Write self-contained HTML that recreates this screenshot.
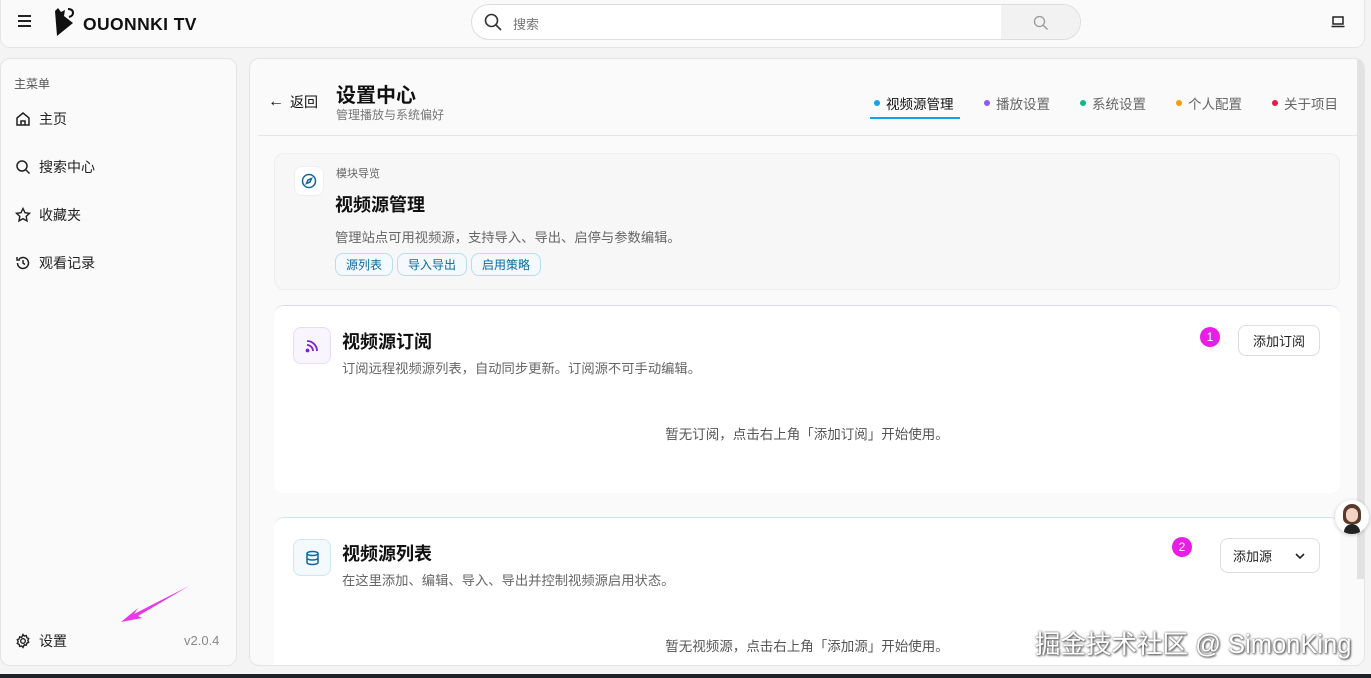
<!DOCTYPE html>
<html><head><meta charset="utf-8"><style>
*{box-sizing:border-box;margin:0;padding:0}
body{width:1371px;height:678px;overflow:hidden;background:#f4f4f5;font-family:"Liberation Sans","Noto Sans CJK SC",sans-serif;color:#111;position:relative}
.hdr{position:absolute;left:0;top:0;width:1365px;height:48px;background:#fafafa;border:1px solid #e6e6e6;border-top:none;border-radius:0 0 10px 10px}
.side{position:absolute;left:0;top:58px;width:237px;height:608px;background:#fafafa;border:1px solid #e4e4e7;border-radius:10px}
.main{position:absolute;left:249px;top:58px;width:1116px;height:608px;background:#fafafa;border:1px solid #e4e4e7;border-radius:10px;overflow:hidden}
.abs{position:absolute}
.nav{position:absolute;left:14px;font-size:14px;display:flex;align-items:center;gap:8px;color:#222}
.tab{position:absolute;top:34px;font-size:13.5px;color:#666;display:flex;align-items:center;gap:6px}
.dot{width:6px;height:6px;border-radius:50%}
.card{position:absolute;background:#fff;border-radius:10px}
.pill{display:inline-block;border:1px solid #b9dcef;color:#0a6a9e;border-radius:8px;font-size:12px;padding:2px 10px;margin-right:4px;background:#f3f9fd}
.btn{position:absolute;border:1px solid #ddd;border-radius:8px;background:#fff;font-size:13px;display:flex;align-items:center;justify-content:center;color:#222}
.badge{position:absolute;width:20px;height:20px;border-radius:50%;background:#e81ee8;color:#fff;font-size:12px;display:flex;align-items:center;justify-content:center}
</style></head><body>
<div class="hdr">
<div class="abs" style="left:17px;top:15px;width:13px">
<div style="height:2px;background:#222;margin-bottom:3px"></div><div style="height:2px;background:#222;margin-bottom:3px"></div><div style="height:2px;background:#222"></div></div>
<svg class="abs" style="left:52px;top:7px" width="24" height="30" viewBox="0 0 24 30"><path d="M2 4 L5 1 L8 5 L12 3 L11 9 L20 16 L4 29 Z" fill="#111"/><path d="M15 2 q5 0 5 4 q0 3 -4 4" stroke="#111" stroke-width="2" fill="none"/></svg>
<div class="abs" style="left:82px;top:14px;font-size:17.5px;font-weight:bold;letter-spacing:.4px">OUONNKI TV</div>
<div class="abs" style="left:470px;top:4px;width:610px;height:36px;border:1px solid #ddd;border-radius:18px;background:#fff;overflow:hidden">
<svg class="abs" style="left:12px;top:8px" width="18" height="18" viewBox="0 0 18 18"><circle cx="7.5" cy="7.5" r="6" stroke="#333" stroke-width="1.6" fill="none"/><path d="M12 12l5 5" stroke="#333" stroke-width="1.6"/></svg>
<div class="abs" style="left:41px;top:9px;font-size:13px;color:#777">搜索</div>
<div class="abs" style="left:529px;top:0;width:81px;height:36px;background:#f2f2f2">
<svg class="abs" style="left:32px;top:10px" width="16" height="16" viewBox="0 0 16 16"><circle cx="6.5" cy="6.5" r="5" stroke="#999" stroke-width="1.3" fill="none"/><path d="M10.5 10.5l4 4" stroke="#999" stroke-width="1.3"/></svg></div></div>
<svg class="abs" style="left:1330px;top:16px" width="14" height="12" viewBox="0 0 14 12"><rect x="2" y="1" width="10" height="7" stroke="#222" stroke-width="1.5" fill="none"/><path d="M0.5 10.5h13" stroke="#222" stroke-width="1.5"/></svg>
</div>
<div class="side">
<div class="abs" style="left:13px;top:16px;font-size:12px;color:#555">主菜单</div>
<div class="nav" style="top:50px"><svg width="16" height="16" viewBox="0 0 16 16" fill="none" stroke="#222" stroke-width="1.5"><path d="M2 7L8 2l6 5v7H2z"/><path d="M6 14v-4h4v4"/></svg>主页</div>
<div class="nav" style="top:98px"><svg width="16" height="16" viewBox="0 0 16 16" fill="none" stroke="#222" stroke-width="1.5"><circle cx="7" cy="7" r="5"/><path d="M11 11l3.5 3.5"/></svg>搜索中心</div>
<div class="nav" style="top:146px"><svg width="16" height="16" viewBox="0 0 16 16" fill="none" stroke="#222" stroke-width="1.4"><path d="M8 1.5l2 4.2 4.5.6-3.3 3.1.8 4.5L8 11.7l-4 2.2.8-4.5L1.5 6.3 6 5.7z"/></svg>收藏夹</div>
<div class="nav" style="top:194px"><svg width="16" height="16" viewBox="0 0 16 16" fill="none" stroke="#222" stroke-width="1.5"><path d="M2.5 8a5.5 5.5 0 1 0 1.6-3.9"/><path d="M2 2v3h3"/><path d="M8 5v3l2 1.5"/></svg>观看记录</div>
<div class="nav" style="top:572px"><svg width="16" height="16" viewBox="0 0 16 16" fill="none" stroke="#222" stroke-width="1.4"><circle cx="8" cy="8" r="2.3"/><path d="M8 1.5l1.3 1.6 2-.5.5 2 1.9.9-.9 1.9.9 1.9-1.9.9-.5 2-2-.5L8 14.5l-1.3-1.6-2 .5-.5-2-1.9-.9.9-1.9-.9-1.9 1.9-.9.5-2 2 .5z"/></svg>设置</div>
<div class="abs" style="left:183px;top:574px;font-size:13px;color:#888">v2.0.4</div>
<svg class="abs" style="left:115px;top:525px" width="80" height="45" viewBox="0 0 80 45"><path d="M73 2 L18 30 L22 24 L5 38 L26 34 L22 32 Z" fill="#e838e8"/></svg>
</div>
<div class="main">
<div class="abs" style="left:18px;top:33px;font-size:14px;display:flex;align-items:center;gap:6px"><span style="font-size:16px">←</span>返回</div>
<div class="abs" style="left:86px;top:20px;font-size:20px;font-weight:bold">设置中心</div>
<div class="abs" style="left:86px;top:47px;font-size:12px;color:#777">管理播放与系统偏好</div>
<div class="tab" style="left:624px;color:#111"><span class="dot" style="background:#0ea5e9"></span>视频源管理</div>
<div class="abs" style="left:620px;top:58px;width:90px;height:2px;background:#0ea5e9"></div>
<div class="tab" style="left:734px"><span class="dot" style="background:#8b5cf6"></span>播放设置</div>
<div class="tab" style="left:830px"><span class="dot" style="background:#10b981"></span>系统设置</div>
<div class="tab" style="left:926px"><span class="dot" style="background:#f59e0b"></span>个人配置</div>
<div class="tab" style="left:1022px"><span class="dot" style="background:#e11d48"></span>关于项目</div>
<div class="abs" style="left:8px;top:76px;width:1100px;height:1px;background:#e6e6e6"></div>
<div class="abs" style="left:1107px;top:0;width:8px;height:520px;background:#e2e2e2"></div>
<div class="card" style="left:24px;top:94px;width:1066px;height:137px;background:#f7f7f8;border:1px solid #eee">
<div class="abs" style="left:19px;top:12px;width:30px;height:30px;background:#fff;border:1px solid #eee;border-radius:8px"><svg class="abs" style="left:6px;top:6px" width="16" height="16" viewBox="0 0 16 16" fill="none" stroke="#0a6a9e" stroke-width="1.5"><circle cx="8" cy="8" r="6.5"/><path d="M10.5 5.5L9 9 5.5 10.5 7 7z"/></svg></div>
<div class="abs" style="left:61px;top:11px;font-size:11px;color:#666">模块导览</div>
<div class="abs" style="left:60px;top:37px;font-size:18px;font-weight:bold">视频源管理</div>
<div class="abs" style="left:60px;top:73px;font-size:13.3px;color:#666">管理站点可用视频源，支持导入、导出、启停与参数编辑。</div>
<div class="abs" style="left:60px;top:99px"><span class="pill">源列表</span><span class="pill">导入导出</span><span class="pill">启用策略</span></div>
</div>
<div class="card" style="left:24px;top:246px;width:1066px;height:188px;border-top:1px solid #ddd8f5">
<div class="abs" style="left:19px;top:21px;width:38px;height:37px;border:1px solid #e5defa;background:#f8f5ff;border-radius:8px"><svg class="abs" style="left:11px;top:11px" width="14" height="14" viewBox="0 0 14 14" fill="none" stroke="#7e22ce" stroke-width="1.8"><path d="M2 6a6 6 0 0 1 6 6M2 2a10 10 0 0 1 10 10"/><circle cx="2.5" cy="11.5" r="1" fill="#7e22ce"/></svg></div>
<div class="abs" style="left:68px;top:22px;font-size:18px;font-weight:bold">视频源订阅</div>
<div class="abs" style="left:68px;top:52px;font-size:13.3px;color:#666">订阅远程视频源列表，自动同步更新。订阅源不可手动编辑。</div>
<div class="abs" style="left:0;top:117px;width:1066px;text-align:center;font-size:13.5px;color:#555">暂无订阅，点击右上角「添加订阅」开始使用。</div>
</div>
<div class="badge" style="left:950px;top:268px">1</div>
<div class="btn" style="left:988px;top:266px;width:82px;height:31px">添加订阅</div>
<div class="card" style="left:24px;top:458px;width:1066px;height:160px;border-top:1px solid #cfe6f2">
<div class="abs" style="left:19px;top:21px;width:38px;height:37px;border:1px solid #cfe6f2;background:#f3f9fd;border-radius:8px"><svg class="abs" style="left:11px;top:10px" width="15" height="16" viewBox="0 0 15 16" fill="none" stroke="#0a6a9e" stroke-width="1.5"><ellipse cx="7.5" cy="3.5" rx="5.5" ry="2"/><path d="M2 3.5v9c0 1.1 2.5 2 5.5 2s5.5-.9 5.5-2v-9M2 8c0 1.1 2.5 2 5.5 2S13 9.1 13 8"/></svg></div>
<div class="abs" style="left:68px;top:22px;font-size:18px;font-weight:bold">视频源列表</div>
<div class="abs" style="left:68px;top:52px;font-size:13.3px;color:#666">在这里添加、编辑、导入、导出并控制视频源启用状态。</div>
<div class="abs" style="left:0;top:117px;width:1066px;text-align:center;font-size:13.5px;color:#555">暂无视频源，点击右上角「添加源」开始使用。</div>
</div>
<div class="badge" style="left:922px;top:478px">2</div>
<div class="btn" style="left:970px;top:479px;width:100px;height:35px;justify-content:flex-start;padding-left:12px">添加源<svg style="position:absolute;right:14px;top:14px" width="10" height="7" viewBox="0 0 10 7"><path d="M1 1l4 4 4-4" stroke="#222" stroke-width="1.6" fill="none"/></svg></div>
</div>
<div class="abs" style="left:1335px;top:500px;width:34px;height:34px;border-radius:50%;background:#fff;box-shadow:0 1px 4px rgba(0,0,0,.2);overflow:hidden"><div class="abs" style="left:8px;top:4px;width:18px;height:20px;border-radius:9px 9px 6px 6px;background:#5a3a2a"></div><div class="abs" style="left:11px;top:8px;width:12px;height:14px;border-radius:6px;background:#f3d3c3"></div><div class="abs" style="left:9px;top:24px;width:16px;height:10px;border-radius:8px 8px 0 0;background:#222"></div></div>
<div class="abs" style="left:1035px;top:624px;font-size:25.5px;color:#fff;text-shadow:0 0 2px #555,1px 1px 2px #444">掘金技术社区 @ SimonKing</div>
<div class="abs" style="left:0;top:674px;width:1371px;height:4px;background:#1e2329"></div>
</body></html>
